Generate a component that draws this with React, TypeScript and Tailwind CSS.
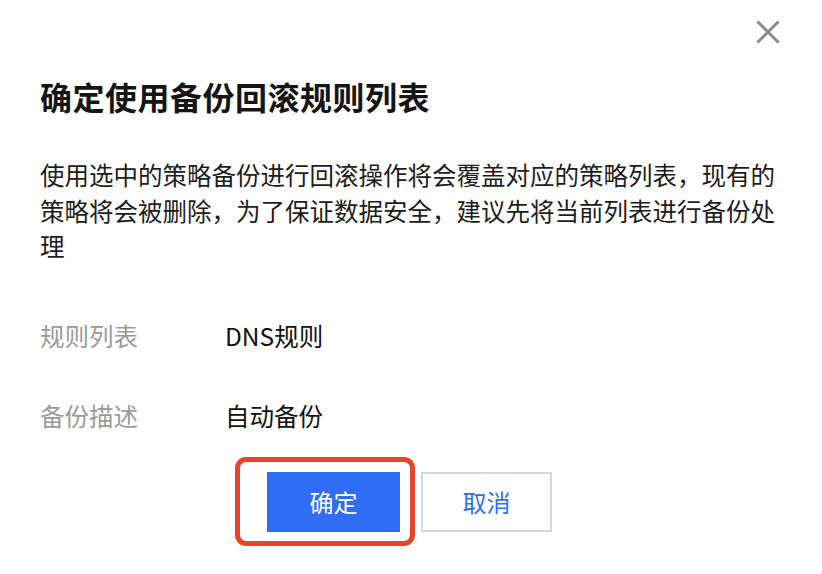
import { useState } from "react";

const FONT = { fontFamily: '"Noto Sans CJK SC", "Noto Sans", sans-serif' };

const ROWS = [
  { label: "规则列表", value: "DNS规则" },
  { label: "备份描述", value: "自动备份" },
];

export default function App() {
  const [open, setOpen] = useState(true);

  return (
    <div className="relative w-[822px] h-[574px] bg-white overflow-hidden" style={FONT}>
      <button
        onClick={() => setOpen(!open)}
        className="absolute left-[755px] top-[19px] w-[26px] h-[26px] flex items-center justify-center"
        aria-label="close"
      >
        <svg width="24" height="24" viewBox="0 0 24 24" fill="none" stroke="#8a8a8a" strokeWidth="3" strokeLinecap="square">
          <path d="M2.5 2.5 L21.5 21.5 M21.5 2.5 L2.5 21.5" />
        </svg>
      </button>

      <div className="flex flex-col pl-10 pt-[74px]">
        <h1 className="text-[32px] leading-[44px] font-bold text-[#151515] tracking-[0.5px]">确定使用备份回滚规则列表</h1>

        <p className="mt-[39px] w-[745px] text-[24.5px] leading-[35.5px] text-[#1c1c1c]">
          使用选中的策略备份进行回滚操作将会覆盖对应的策略列表，现有的策略将会被删除，为了保证数据安全，建议先将当前列表进行备份处理
        </p>

        <div className="mt-[54px] flex flex-col gap-[44px]">
          {ROWS.map((r) => (
            <div key={r.label} className="flex items-center text-[24.5px] leading-[36px]">
              <span className="w-[185px] text-[#9a9a9a]">{r.label}</span>
              <span className="text-[#111]">{r.value}</span>
            </div>
          ))}
        </div>
      </div>

      <div className="mt-[38px] flex justify-center gap-[21px] pr-[3px]">
        <div className="relative">
          <div className="absolute left-[-32px] top-[-15px] w-[180px] h-[89px] rounded-[11px] border-[5px] border-[#e8432b]" />
          <button className="w-[133px] h-[60px] bg-[#306df5] text-white text-[24px]">确定</button>
        </div>
        <button className="w-[131px] h-[60px] border-2 border-[#d3d8e0] bg-white text-[#306df5] text-[24px]">取消</button>
      </div>
    </div>
  );
}
